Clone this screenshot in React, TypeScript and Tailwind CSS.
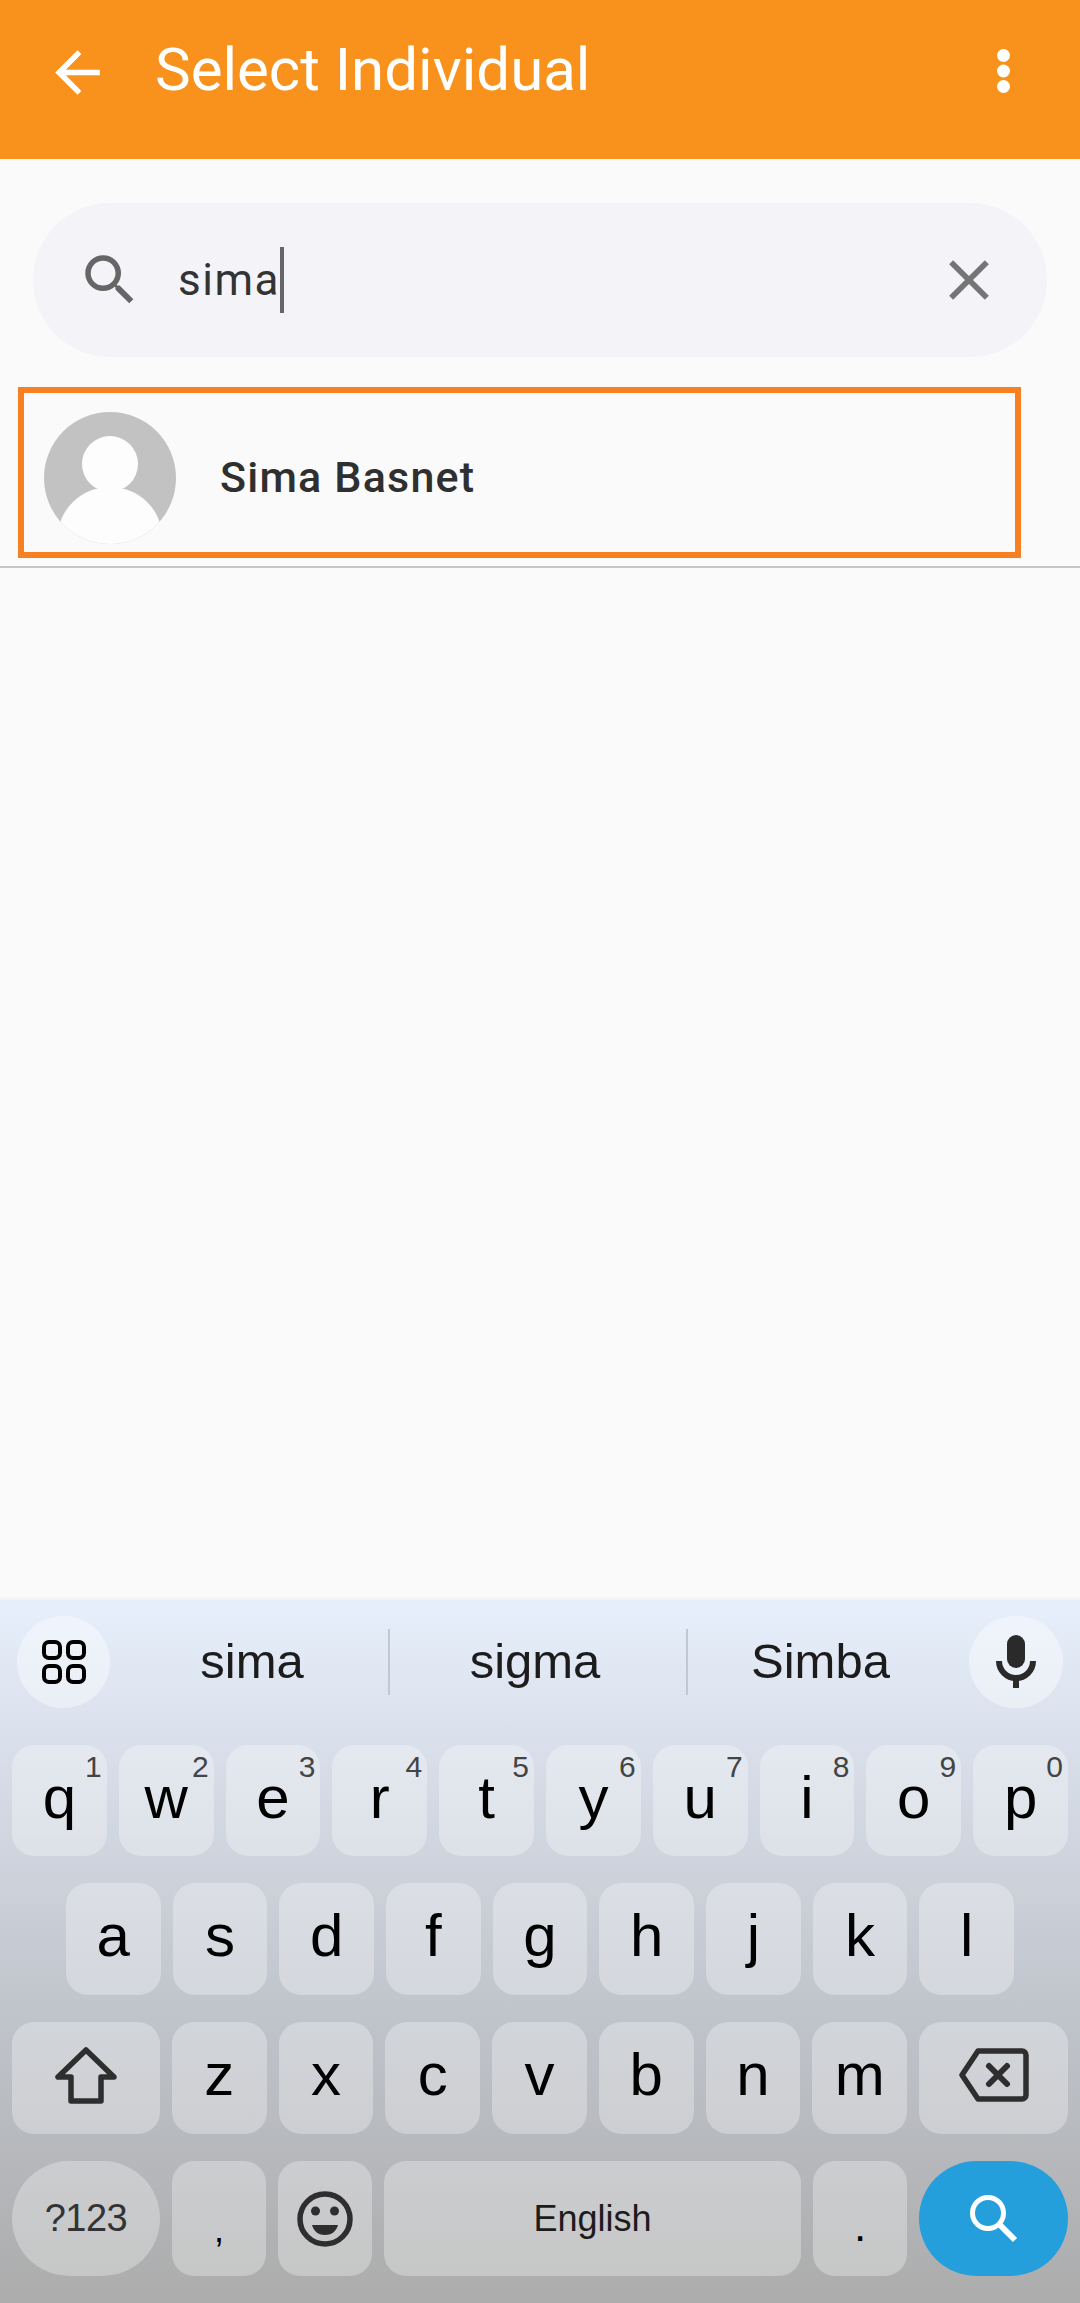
import React from 'react';

const row1 = [
  ['q', '1'],
  ['w', '2'],
  ['e', '3'],
  ['r', '4'],
  ['t', '5'],
  ['y', '6'],
  ['u', '7'],
  ['i', '8'],
  ['o', '9'],
  ['p', '0'],
];
const row2 = ['a', 's', 'd', 'f', 'g', 'h', 'j', 'k', 'l'];
const row3 = ['z', 'x', 'c', 'v', 'b', 'n', 'm'];

const keyClass =
  'flex items-center justify-center rounded-[22px] bg-white/30 pb-[6px] text-[60px] text-black';

const BackArrow = () => (
  <svg viewBox="0 0 24 24" className="mt-[2px] h-[67px] w-[67px] shrink-0" fill="white">
    <path d="M20 11H7.83l5.59-5.59L12 4l-8 8 8 8 1.41-1.41L7.83 13H20v-2z" />
  </svg>
);

const MoreDots = () => (
  <svg viewBox="0 0 13 44" className="mt-[12px] h-[44px] w-[13px] shrink-0" fill="white">
    <circle cx="6.5" cy="6.5" r="6.5" />
    <circle cx="6.5" cy="22" r="6.5" />
    <circle cx="6.5" cy="37.5" r="6.5" />
  </svg>
);

const SearchGlyph = () => (
  <svg viewBox="0 0 24 24" className="h-[66px] w-[66px] shrink-0" fill="#666666">
    <path d="M15.5 14h-.79l-.28-.27A6.471 6.471 0 0 0 16 9.5 6.5 6.5 0 1 0 9.5 16c1.61 0 3.09-.59 4.23-1.57l.27.28v.79l5 4.99L20.49 19l-4.99-5zm-6 0C7.01 14 5 11.99 5 9.5S7.01 5 9.5 5 14 7.01 14 9.5 11.99 14 9.5 14z" />
  </svg>
);

const CloseGlyph = () => (
  <svg viewBox="0 0 24 24" className="ml-auto h-[68px] w-[68px] shrink-0" fill="#757575">
    <path d="M19 6.41 17.59 5 12 10.59 6.41 5 5 6.41 10.59 12 5 17.59 6.41 19 12 13.41 17.59 19 19 17.59 13.41 12z" />
  </svg>
);

const Avatar = () => (
  <svg viewBox="0 0 132 132" className="h-[132px] w-[132px] shrink-0">
    <defs>
      <clipPath id="avatar-clip">
        <circle cx="66" cy="66" r="66" />
      </clipPath>
    </defs>
    <g clipPath="url(#avatar-clip)">
      <rect width="132" height="132" fill="#c2c2c2" />
      <circle cx="66" cy="52" r="28" fill="#fdfdfd" />
      <ellipse cx="66" cy="125" rx="52" ry="50" fill="#fdfdfd" />
    </g>
  </svg>
);

const GridIcon = () => (
  <svg viewBox="0 0 44 44" className="h-[44px] w-[44px]" fill="none" stroke="#000000" strokeWidth="4">
    <rect x="2" y="2" width="16" height="16" rx="5" />
    <rect x="26" y="2" width="16" height="16" rx="5" />
    <rect x="2" y="26" width="16" height="16" rx="5" />
    <rect x="26" y="26" width="16" height="16" rx="5" />
  </svg>
);

const MicIcon = () => (
  <svg viewBox="0 0 40 54" className="h-[54px] w-[40px]" fill="none">
    <rect x="11" y="0" width="18" height="33" rx="9" fill="#2a2a2a" />
    <path d="M3 26a17 17 0 0 0 34 0" stroke="#2a2a2a" strokeWidth="6" />
    <path d="M20 43v10" stroke="#2a2a2a" strokeWidth="6" />
  </svg>
);

const ShiftIcon = () => (
  <svg viewBox="0 0 62 58" className="h-[58px] w-[62px]" fill="none" stroke="#2e2e2e" strokeWidth="5.5" strokeLinejoin="round">
    <path d="M31 4 3 31h13v24h30V31h13z" />
  </svg>
);

const BackspaceIcon = () => (
  <svg viewBox="0 0 70 54" className="h-[54px] w-[70px]" fill="none" stroke="#2e2e2e" strokeLinejoin="round">
    <path d="M19 3h44a4 4 0 0 1 4 4v40a4 4 0 0 1-4 4H19L3 27z" strokeWidth="5.5" />
    <path d="M30 18l18 18M48 18 30 36" strokeWidth="6" strokeLinecap="round" />
  </svg>
);

const EmojiIcon = () => (
  <svg viewBox="0 0 56 56" className="h-[56px] w-[56px]">
    <circle cx="28" cy="28" r="25" fill="none" stroke="#2e2e2e" strokeWidth="5.5" />
    <circle cx="18.5" cy="20" r="4.5" fill="#2e2e2e" />
    <circle cx="37.5" cy="20" r="4.5" fill="#2e2e2e" />
    <path d="M15 34h26c-2 7-7 10-13 10s-11-3-13-10z" fill="#2e2e2e" />
  </svg>
);

const KeySearchIcon = () => (
  <svg viewBox="0 0 48 48" className="h-[48px] w-[48px]" fill="none" stroke="white">
    <circle cx="18" cy="18" r="15.5" strokeWidth="5" />
    <path d="M29 29l16 16" strokeWidth="6" />
  </svg>
);

const App = () => {
  return (
    <div
      className="flex h-[2303px] w-[1080px] flex-col overflow-hidden bg-[#fafafa]"
      style={{ fontFamily: 'Roboto, sans-serif' }}
    >
      {/* app bar */}
      <div className="flex h-[159px] shrink-0 items-start bg-[#f8921c] pt-[37px] pl-[44px] pr-[70px] text-white">
        <BackArrow />
        <span className="ml-[44px] flex-1 text-[60px] leading-[66px]">Select Individual</span>
        <MoreDots />
      </div>

      {/* search */}
      <div className="mt-[44px] ml-[33px] flex h-[154px] w-[1014px] shrink-0 items-center rounded-[77px] bg-[#f3f3f8] pl-[44px] pr-[44px]">
        <SearchGlyph />
        <span className="ml-[35px] text-[44px] tracking-[1.5px] text-[#333333]">sima</span>
        <span className="h-[66px] w-[4px] bg-[#666666]" />
        <CloseGlyph />
      </div>

      {/* result */}
      <div className="mt-[30px] ml-[18px] flex h-[171px] w-[1003px] shrink-0 items-center border-[6px] border-[#f78122] pt-[10px] pl-[20px]">
        <Avatar />
        <span className="ml-[44px] text-[43px] font-medium tracking-[1.2px] text-[#2f2f2f]">Sima Basnet</span>
      </div>
      <div className="mt-[8px] h-[2px] shrink-0 bg-[#c6c6c6]" />

      {/* keyboard */}
      <div
        className="mt-auto flex h-[703px] shrink-0 flex-col bg-gradient-to-b from-[#e7effc] via-[#bfc3ca] via-60% to-[#acacac] px-[12px] shadow-[0_-2px_3px_rgba(0,0,0,0.04)]"
        style={{ fontFamily: '"Liberation Sans", sans-serif' }}
      >
        <div className="mt-[16px] flex h-[92px] items-center">
          <div className="ml-[5px] flex h-[92px] w-[93px] shrink-0 items-center justify-center rounded-full bg-white/40">
            <GridIcon />
          </div>
          <div className="flex flex-1 items-center text-[49px] text-[#1c1c1c]">
            <span className="w-[278px] pl-[6px] text-center">sima</span>
            <span className="h-[66px] w-[2px] bg-[#c2c8d2]" />
            <span className="w-[296px] pr-[6px] text-center">sigma</span>
            <span className="h-[66px] w-[2px] bg-[#c2c8d2]" />
            <span className="flex-1 pr-[16px] text-center">Simba</span>
          </div>
          <div className="mr-[5px] flex h-[92px] w-[94px] shrink-0 items-center justify-center rounded-full bg-white/40">
            <MicIcon />
          </div>
        </div>

        <div className="mt-[37px] flex h-[111px] gap-[12px]">
          {row1.map(([letter, digit]) => (
            <div key={letter} className={`relative flex-1 ${keyClass}`}>
              {letter}
              <span className="absolute top-[7px] right-[5px] text-[30px] leading-none text-[#444444]">{digit}</span>
            </div>
          ))}
        </div>

        <div className="mt-[27px] flex h-[112px] justify-center gap-[12px]">
          {row2.map((letter) => (
            <div key={letter} className={`w-[94.7px] ${keyClass}`}>
              {letter}
            </div>
          ))}
        </div>

        <div className="mt-[27px] flex h-[112px] gap-[12px]">
          <div className={`w-[148px] ${keyClass}`}>
            <ShiftIcon />
          </div>
          {row3.map((letter) => (
            <div key={letter} className={`flex-1 ${keyClass}`}>
              {letter}
            </div>
          ))}
          <div className={`w-[149px] ${keyClass}`}>
            <BackspaceIcon />
          </div>
        </div>

        <div className="mt-[27px] flex h-[115px] gap-[12px]">
          <div className="flex w-[148px] items-center justify-center rounded-full bg-white/30 text-[38px] tracking-[-0.5px] text-[#333333]">
            ?123
          </div>
          <div className="flex w-[94px] items-center justify-center rounded-[22px] bg-white/30 pt-[22px] text-[36px] text-black">,</div>
          <div className="flex w-[94px] items-center justify-center rounded-[22px] bg-white/30">
            <EmojiIcon />
          </div>
          <div className="flex flex-1 items-center justify-center rounded-[22px] bg-white/30 text-[36px] text-[#1c1c1c]">
            English
          </div>
          <div className="flex w-[94px] items-center justify-center rounded-[22px] bg-white/30 pt-[14px] text-[44px] text-black">.</div>
          <div className="flex w-[149px] items-center justify-center rounded-full bg-[#259fdc]">
            <KeySearchIcon />
          </div>
        </div>
      </div>
    </div>
  );
};

export default App;
